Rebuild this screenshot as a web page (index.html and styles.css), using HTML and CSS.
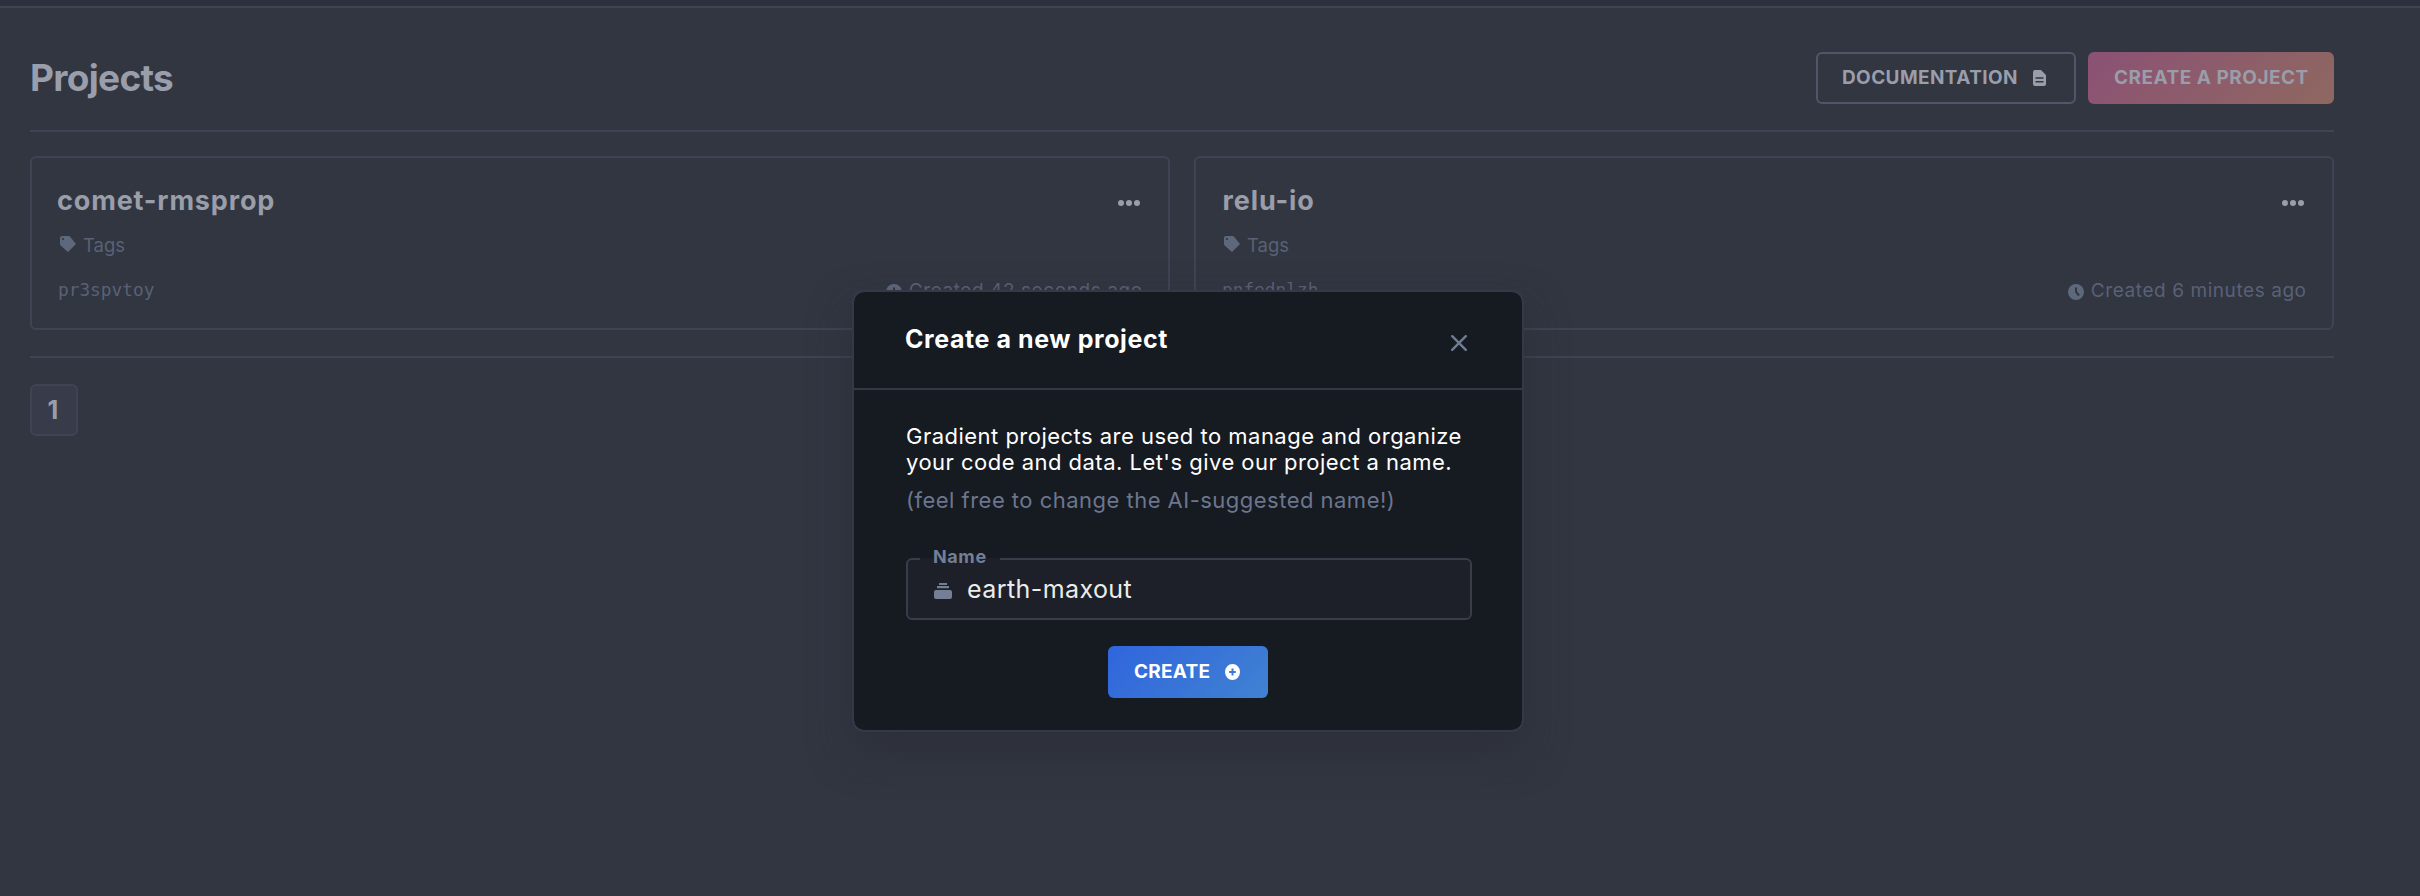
FILE: index.html
```html
<!DOCTYPE html>
<html lang="en">
<head>
<meta charset="utf-8">
<title>Projects</title>
<link rel="stylesheet" href="styles.css">
</head>
<body>
<div class="topbar"></div>
<main class="page">
  <header class="page-header">
    <h1 class="page-title">Projects</h1>
    <div class="actions">
      <button class="btn btn-outline"><span class="t-doc">DOCUMENTATION</span>
        <svg width="13" height="16" viewBox="0 0 13 16"><path fill="currentColor" fill-rule="evenodd" d="M2 0h6l5 5v9a2 2 0 0 1-2 2H2a2 2 0 0 1-2-2V2a2 2 0 0 1 2-2zM2.500 7.200v1.600h8V7.200zM2.500 11v1.600h8V11z"/></svg>
      </button>
      <button class="btn btn-accent"><span class="t-cap">CREATE A PROJECT</span></button>
    </div>
  </header>
  <section class="cards">
    <article class="card">
      <div class="card-top"><h2 class="card-title">comet-rmsprop</h2>
        <svg class="dots" width="22" height="6" viewBox="0 0 22 6"><g fill="currentColor"><circle cx="3" cy="3" r="3"/><circle cx="11" cy="3" r="3"/><circle cx="19" cy="3" r="3"/></g></svg></div>
      <div class="tags"><svg width="16" height="16" viewBox="0 0 16 16"><path fill="currentColor" fill-rule="evenodd" d="M2 0h6.500a2 2 0 0 1 1.400.6L16 8l-8 8L.6 9.400A2 2 0 0 1 0 8V2a2 2 0 0 1 2-2zM3 1.900a1.100 1.100 0 1 0 0 2.200a1.100 1.100 0 0 0 0-2.200z"/></svg><span>Tags</span></div>
      <div class="card-foot"><code class="handle">pr3spvtoy</code>
        <div class="created"><svg width="16" height="16" viewBox="0 0 16 16"><circle cx="8" cy="8" r="8" fill="currentColor"/><path class="clock-hand" d="M8 3.500V8l3 3.500"/></svg><span>Created 42 seconds ago</span></div></div>
    </article>
    <article class="card">
      <div class="card-top"><h2 class="card-title title-relu">relu-io</h2>
        <svg class="dots" width="22" height="6" viewBox="0 0 22 6"><g fill="currentColor"><circle cx="3" cy="3" r="3"/><circle cx="11" cy="3" r="3"/><circle cx="19" cy="3" r="3"/></g></svg></div>
      <div class="tags"><svg width="16" height="16" viewBox="0 0 16 16"><path fill="currentColor" fill-rule="evenodd" d="M2 0h6.500a2 2 0 0 1 1.400.6L16 8l-8 8L.6 9.400A2 2 0 0 1 0 8V2a2 2 0 0 1 2-2zM3 1.900a1.100 1.100 0 1 0 0 2.200a1.100 1.100 0 0 0 0-2.200z"/></svg><span>Tags</span></div>
      <div class="card-foot"><code class="handle">pnfednlzh</code>
        <div class="created"><svg width="16" height="16" viewBox="0 0 16 16"><circle cx="8" cy="8" r="8" fill="currentColor"/><path class="clock-hand" d="M8 3.500V8l3 3.500"/></svg><span>Created 6 minutes ago</span></div></div>
    </article>
  </section>
  <nav class="pager"><button class="pager-item">1</button></nav>
</main>

<div class="modal" role="dialog">
  <div class="modal-head"><h3 class="modal-title">Create a new project</h3>
    <svg class="close" width="16" height="16" viewBox="0 0 16 16"><path d="M1.200 1.200l13.600 13.600M14.800 1.200L1.200 14.800"/></svg></div>
  <div class="modal-body">
    <p class="lead">Gradient projects are used to manage and organize<br>your code and data. Let's give our project a name.</p>
    <p class="hint">(feel free to change the AI-suggested name!)</p>
    <div class="field">
      <label class="field-label">Name</label>
      <svg width="18" height="16" viewBox="0 0 18 16"><path fill="currentColor" d="M5 0h8v2H5zM3 3h12v2.200H3zM2 7h14a2 2 0 0 1 2 2v5a2 2 0 0 1-2 2H2a2 2 0 0 1-2-2V9a2 2 0 0 1 2-2z"/></svg>
      <span class="field-value">earth-maxout</span>
    </div>
    <button class="btn btn-primary"><span class="t-create">CREATE</span>
      <svg width="15" height="16" viewBox="0 0 15 16"><path fill="currentColor" fill-rule="evenodd" d="M7.500 0a7.500 8 0 1 0 0 16a7.500 8 0 0 0 0-16zM6.500 4.600h2V7h2.300v2H8.500v2.400h-2V9H4.200V7h2.300z"/></svg>
    </button>
  </div>
</div>
</body>
</html>
```
FILE: styles.css
```css
* { box-sizing: border-box; margin: 0; padding: 0; }
body { width: 2420px; height: 896px; overflow: hidden; background: #313641; font-family: Inter, "Noto Sans", sans-serif; color: #9a9daa; }
svg { display: block; flex: none; }
button { font-family: inherit; color: inherit; border: 0; background: none; }
span, h1, h2, h3, label, code, p { white-space: nowrap; }
.topbar { height: 8px; background: #2e303d; border-bottom: 2px solid #3f4354; }
.page { width: 2334px; padding-left: 30px; }
.page-header { height: 124px; display: flex; justify-content: space-between; align-items: flex-start; padding-top: 44px; border-bottom: 2px solid #3f4354; }
.page-title { font-size: 37px; line-height: 51px; font-weight: 700; letter-spacing: -0.7px; }
.actions { display: flex; gap: 12px; }
.btn { height: 52px; border-radius: 6px; display: flex; align-items: center; font-size: 19px; font-weight: 700; }
.btn span { padding-bottom: 1px; }
.btn-outline { width: 260px; border: 2px solid #50566b; padding-left: 24px; gap: 15px; }
.t-doc { letter-spacing: .4px; }
.btn-accent { width: 246px; padding-left: 26px; background: linear-gradient(135deg, #8b5175, #8f6860); }
.t-cap { letter-spacing: .5px; }
.cards { display: grid; grid-template-columns: 1fr 1fr; gap: 24px; padding: 24px 0 26px; border-bottom: 2px solid #3f4354; }
.card { height: 174px; border: 2px solid #3f4354; border-radius: 6px; padding: 26px 26px 0; }
.card-top { display: flex; justify-content: space-between; height: 36px; }
.card-title { margin-left: -1px; font-size: 27px; line-height: 34px; font-weight: 700; letter-spacing: .85px; }
.title-relu { margin-left: .6px; }
.dots { margin: 16px 2px 0 0; }
.tags { display: flex; gap: 7px; height: 28px; margin: 10px 0 0 2px; font-size: 18.5px; line-height: 31px; color: #5a6176; }
.tags svg, .created svg { color: #5d687b; }
.tags svg { margin-top: 6px; }
.card-foot { display: flex; justify-content: space-between; margin-top: 18px; color: #5a6176; font-size: 19px; line-height: 30px; }
.handle { font-family: "DejaVu Sans Mono", monospace; font-size: 17.8px; line-height: 27px; }
.created { display: flex; gap: 7px; letter-spacing: .57px; }
.created svg { margin-top: 8px; }
.created span { margin-right: -.6px; }
.clock-hand { fill: none; stroke: #313641; stroke-width: 2; }
.pager { padding-top: 26px; }
.pager-item { width: 48px; height: 52px; border: 2px solid #3f4354; border-radius: 6px; background: #383c4a; font-size: 25px; font-weight: 700; padding-right: 2px; }
.modal { position: absolute; left: 852px; top: 290px; width: 672px; height: 442px; border: 2px solid #353847; border-radius: 12px; background: #161a21; background-clip: padding-box; box-shadow: 0 20px 40px rgba(42, 42, 52, .5); color: #fff; }
.modal-head { height: 98px; border-bottom: 2px solid #353847; display: flex; justify-content: space-between; padding: 31px 55px 0 51px; }
.modal-title { font-size: 25px; line-height: 33px; font-weight: 700; letter-spacing: .58px; }
.close { margin-top: 12px; stroke: #717c93; stroke-width: 2.4; stroke-linecap: round; }
.modal-body { padding: 33px 50px 0 52px; }
.lead, .hint { font-size: 22px; line-height: 26px; letter-spacing: .48px; }
.hint { margin-top: 12px; color: #6c768d; }
.field { position: relative; margin-top: 45px; height: 62px; border: 2px solid #393d49; border-radius: 6px; background: #1d2028; display: flex; align-items: center; padding-left: 26px; gap: 15px; color: #747f95; }
.field svg { margin-top: 4px; }
.field-label { position: absolute; left: 12px; top: -16px; width: 80px; padding-left: 13px; font-size: 18px; line-height: 26px; font-weight: 700; letter-spacing: .6px; background: linear-gradient(#161a21 0 14px, #1d2028 14px); }
.field-value { font-size: 25px; letter-spacing: .42px; color: #ececec; }
.btn-primary { width: 160px; margin: 26px 0 0 202px; padding-left: 26px; gap: 15px; background: linear-gradient(135deg, #3065dd, #4082d2); color: #fff; }
.t-create { letter-spacing: .25px; }
```
